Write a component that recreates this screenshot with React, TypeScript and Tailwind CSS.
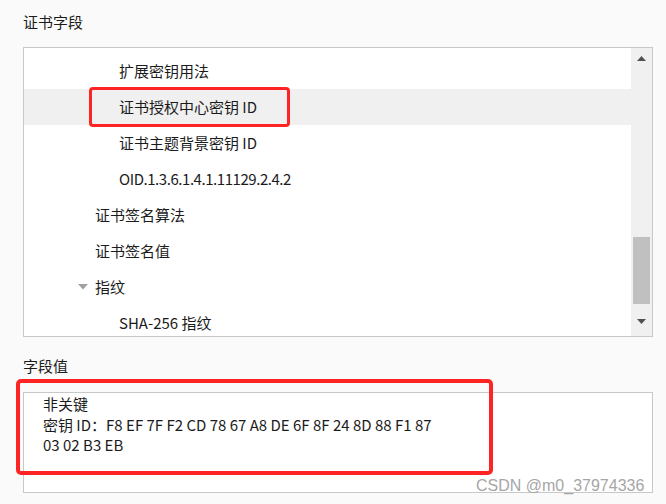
import React from "react";

const rows = [
  { label: "扩展密钥用法", indent: 96 },
  { label: "证书授权中心密钥 ID", indent: 96, selected: true },
  { label: "证书主题背景密钥 ID", indent: 96 },
  { label: "OID.1.3.6.1.4.1.11129.2.4.2", indent: 96, tight: true },
  { label: "证书签名算法", indent: 72 },
  { label: "证书签名值", indent: 72 },
  { label: "指纹", indent: 72, expanded: true },
  { label: "SHA-256 指纹", indent: 96 },
];

const font = { fontFamily: '"Noto Sans CJK SC", "Noto Sans", sans-serif' };

const App = () => {
  return (
    <div
      className="relative h-[504px] w-[666px] overflow-hidden bg-[#fafafa] pl-[23px] text-[15px] text-[#1b1b1b]"
      style={font}
    >
      <div className="flex h-[47px] items-start pt-[11px] leading-[22px]">证书字段</div>

      <div className="flex h-[290px] w-[630px] border border-[#c8c8c8] bg-white">
        <div className="flex-1 overflow-hidden pt-[5px]">
          {rows.map((row) => (
            <div
              key={row.label}
              className={
                "flex h-[36px] items-center " +
                (row.selected ? "bg-[#f0f0f0] " : "") +
                (row.tight ? "tracking-[-0.45px]" : "")
              }
              style={{ paddingLeft: row.indent - 1 }}
            >
              {row.expanded && (
                <svg width="10" height="6" viewBox="0 0 10 6" className="-ml-[17px] mr-[7px]">
                  <path d="M0 0 H10 L5 5.5 Z" fill="#a0a0a0" />
                </svg>
              )}
              {row.label}
            </div>
          ))}
        </div>
        <div className="flex w-[21px] flex-col bg-[#f0f0f0]">
          <div className="flex h-[20px] items-center justify-center pt-[1px]">
            <svg width="9" height="5" viewBox="0 0 9 5">
              <path d="M4.5 0 L9 5 H0 Z" fill="#505050" />
            </svg>
          </div>
          <div className="h-[169px]" />
          <div className="mx-[2px] h-[67px] bg-[#c0c0c0]" />
          <div className="flex flex-1 items-center justify-center pt-[3px]">
            <svg width="9" height="5" viewBox="0 0 9 5">
              <path d="M0 0 H9 L4.5 5 Z" fill="#505050" />
            </svg>
          </div>
        </div>
      </div>

      <div className="flex h-[55px] items-start pt-[18px] leading-[22px]">字段值</div>

      <div className="h-[101px] w-[630px] border border-[#c8c8c8] bg-white pl-[19px] pt-[1px] leading-[20.5px]">
        <div>非关键</div>
        <div>密钥 ID：F8 EF 7F F2 CD 78 67 A8 DE 6F 8F 24 8D 88 F1 87</div>
        <div>03 02 B3 EB</div>
      </div>

      {/* red annotation boxes */}
      <div className="pointer-events-none absolute left-[89px] top-[87px] h-[40px] w-[201px] rounded-[4px] border-[3px] border-[#ff2424]" />
      <div className="pointer-events-none absolute left-[16px] top-[379px] h-[96px] w-[477px] rounded-[5px] border-[4px] border-[#ff2424]" />

      <div
        className="pointer-events-none absolute left-[476px] top-[476px] text-[16px] leading-[20px] text-[#a6a6a6]"
        style={{ fontFamily: '"Liberation Sans", Arial, sans-serif' }}
      >
        CSDN @m0_37974336
      </div>
    </div>
  );
};

export default App;
